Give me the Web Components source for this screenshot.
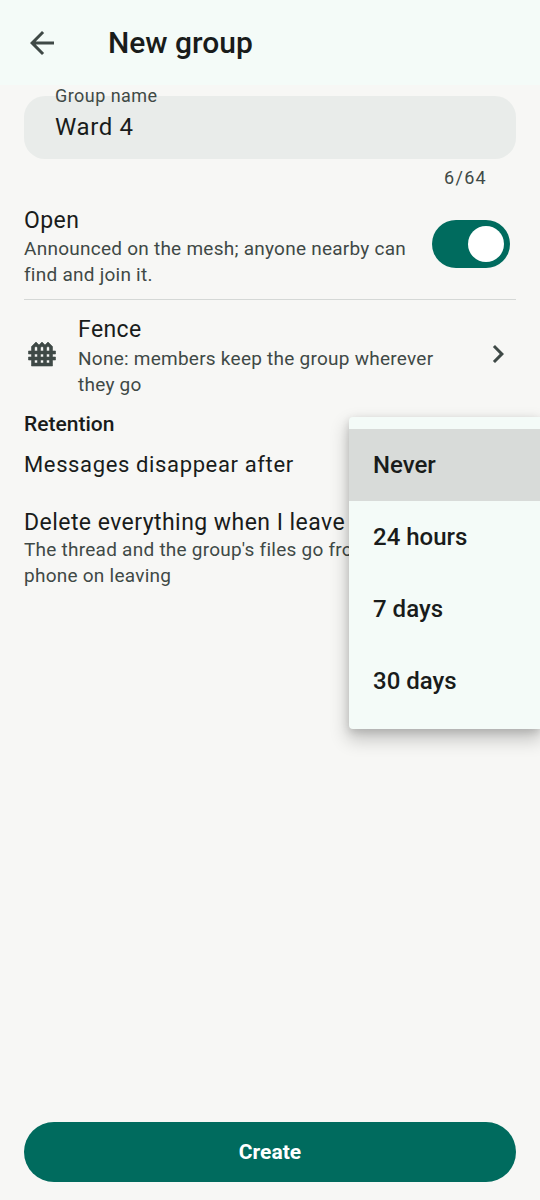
<!DOCTYPE html>
<html>
<head>
<meta charset="utf-8">
<title>New group</title>
<style>
  html, body { margin: 0; padding: 0; }
  body {
    width: 540px; height: 1200px; overflow: hidden; position: relative;
    background: #f7f7f5; color: #191c1b;
    font-family: Roboto, "Liberation Sans", sans-serif;
    display: flex; flex-direction: column;
  }
  main { flex: 1; display: flex; flex-direction: column; padding: 0 24px; }
</style>
</head>
<body>
<app-bar>New group</app-bar>
<main>
  <text-field label="Group name" value="Ward 4" counter="6/64"></text-field>
  <switch-row title="Open" on>Announced on the mesh; anyone nearby can find and join it.</switch-row>
  <nav-row title="Fence">None: members keep the group wherever they go</nav-row>
  <section-label>Retention</section-label>
  <plain-row title="Messages disappear after"></plain-row>
  <plain-row class="leave" title="Delete everything when I leave">The thread and the group's files go from this phone on leaving</plain-row>
</main>
<action-button>Create</action-button>
<drop-menu>
  <menu-item selected>Never</menu-item>
  <menu-item>24 hours</menu-item>
  <menu-item>7 days</menu-item>
  <menu-item>30 days</menu-item>
</drop-menu>

<script>
class AppBar extends HTMLElement {
  constructor() {
    super();
    this.attachShadow({ mode: 'open' });
    this.shadowRoot.innerHTML = `
      <style>
        :host { display: flex; align-items: center; height: 85px; flex: none; background: #f4fbf8; padding-left: 24px; box-sizing: border-box; }
        svg { width: 36px; height: 36px; fill: #3f4946; flex: none; }
        .title { margin-left: 48px; font-size: 30px; font-weight: 500; color: #191c1b; letter-spacing: 0; }
      </style>
      <svg viewBox="0 0 24 24"><path d="M20 11H7.83l5.59-5.59L12 4l-8 8 8 8 1.41-1.41L7.83 13H20v-2z"/></svg>
      <span class="title"><slot></slot></span>`;
  }
}

class TextField extends HTMLElement {
  constructor() {
    super();
    this.attachShadow({ mode: 'open' });
  }
  connectedCallback() {
    this.shadowRoot.innerHTML = `
      <style>
        :host { display: block; padding-top: 11px; }
        .box { position: relative; height: 63px; border-radius: 21px; background: #e9ecea; display: flex; align-items: center; padding: 0 31px 2px 31px; box-sizing: border-box; font-size: 24px; letter-spacing: 0.65px; color: #191c1b; }
        .label { position: absolute; left: 31px; top: -11px; font-size: 18px; line-height: 21px; letter-spacing: 0.45px; color: #3f4946; }
        .count { text-align: right; padding: 8px 29px 0 0; font-size: 18px; line-height: 22px; letter-spacing: 1.3px; color: #3f4946; }
      </style>
      <div class="box"><span class="label">${this.getAttribute('label')}</span>${this.getAttribute('value')}</div>
      <div class="count">${this.getAttribute('counter')}</div>`;
  }
}

class SwitchRow extends HTMLElement {
  constructor() {
    super();
    this.attachShadow({ mode: 'open' });
  }
  connectedCallback() {
    this.shadowRoot.innerHTML = `
      <style>
        :host { display: flex; align-items: center; justify-content: space-between; height: 111px; padding-bottom: 1px; box-sizing: border-box; border-bottom: 1px solid #d5d8d6; }
        .text { width: 392px; padding-top: 6px; }
        .t { font-size: 23px; line-height: 30px; letter-spacing: 0.4px; color: #191c1b; }
        .s { font-size: 19px; line-height: 26px; letter-spacing: 0.25px; color: #3f4946; }
        .track { width: 78px; height: 48px; border-radius: 24px; background: #006b5e; margin-right: 6px; position: relative; flex: none; }
        .thumb { position: absolute; right: 6px; top: 6px; width: 36px; height: 36px; border-radius: 50%; background: #fff; }
      </style>
      <div class="text"><div class="t">${this.getAttribute('title')}</div><div class="s"><slot></slot></div></div>
      <div class="track"><div class="thumb"></div></div>`;
  }
}

class NavRow extends HTMLElement {
  constructor() {
    super();
    this.attachShadow({ mode: 'open' });
  }
  connectedCallback() {
    this.shadowRoot.innerHTML = `
      <style>
        :host { display: flex; align-items: center; height: 108px; box-sizing: border-box; }
        .fence { width: 36px; height: 36px; fill: #3f4946; stroke: #3f4946; stroke-width: .4; stroke-linejoin: round; flex: none; }
        .text { margin-left: 18px; width: 372px; flex: none; padding-top: 5px; }
        .t { font-size: 23px; line-height: 30px; letter-spacing: 0.4px; color: #191c1b; }
        .s { font-size: 19px; line-height: 26px; letter-spacing: 0.25px; color: #3f4946; padding-top: 1px; }
        .chev { width: 36px; height: 36px; fill: #3f4946; margin-left: 30px; flex: none; }
      </style>
      <svg class="fence" viewBox="0 0 24 24"><path d="M21 12v-2h-2V7l-3-3-2 2-2-2-2 2-2-2-3 3v3H3v2h2v2H3v2h2v4h14v-4h2v-2h-2v-2h2zM16 6.83l1 1V10h-2V7.83l.41-.41.59-.59zM12 6.83l.59.59.41.41V10h-2V7.83l.41-.41.59-.59zM11 14v-2h2v2h-2zm2 2v2.02h-2V16h2zM9 12v2H7v-2h2zM8 6.83l.59.59.41.41V10H7V7.83l1-1zM7 16h2v2.02H7V16zm10 2.02h-2V16h2v2.02zM17 14h-2v-2h2v2z"/></svg>
      <div class="text"><div class="t">${this.getAttribute('title')}</div><div class="s"><slot></slot></div></div>
      <svg class="chev" viewBox="0 0 24 24"><path d="M10 6L8.59 7.41 13.17 12l-4.58 4.59L10 18l6-6z"/></svg>`;
  }
}

class SectionLabel extends HTMLElement {
  constructor() {
    super();
    this.attachShadow({ mode: 'open' });
    this.shadowRoot.innerHTML = `
      <style>
        :host { display: block; font-size: 21px; font-weight: 500; line-height: 28px; color: #191c1b; position: relative; top: 2px; }
      </style>
      <slot></slot>`;
  }
}

class PlainRow extends HTMLElement {
  constructor() {
    super();
    this.attachShadow({ mode: 'open' });
  }
  connectedCallback() {
    this.shadowRoot.innerHTML = `
      <style>
        :host { display: block; padding-top: 14px; }
        :host(.leave) { padding-top: 28px; }
        .t { font-size: 22px; line-height: 30px; letter-spacing: 0.63px; color: #191c1b; }
        :host(.leave) .t { font-size: 23px; line-height: 29px; letter-spacing: 0.45px; }
        .s { font-size: 19px; line-height: 26px; letter-spacing: 0.25px; color: #3f4946; width: 400px; }
      </style>
      <div class="t">${this.getAttribute('title')}</div>
      <div class="s"><slot></slot></div>`;
  }
}

class ActionButton extends HTMLElement {
  constructor() {
    super();
    this.attachShadow({ mode: 'open' });
    this.shadowRoot.innerHTML = `
      <style>
        :host { display: flex; align-items: center; justify-content: center; flex: none; height: 60px; margin: 0 24px 18px; border-radius: 30px; background: #006b5e; color: #fff; font-size: 21px; font-weight: 700; }
      </style>
      <slot></slot>`;
  }
}

class DropMenu extends HTMLElement {
  constructor() {
    super();
    this.attachShadow({ mode: 'open' });
    this.shadowRoot.innerHTML = `
      <style>
        :host { position: absolute; left: 349px; top: 417px; width: 191px; padding: 12px 0; box-sizing: border-box; background: #f4fbf8; border-radius: 4px 0 0 4px; box-shadow: 0 9px 18px 2px rgba(0,0,0,.2), 0 3px 8px rgba(0,0,0,.14); }
      </style>
      <slot></slot>`;
  }
}

class MenuItem extends HTMLElement {
  constructor() {
    super();
    this.attachShadow({ mode: 'open' });
    this.shadowRoot.innerHTML = `
      <style>
        :host { display: flex; align-items: center; height: 72px; padding-left: 24px; font-size: 24px; font-weight: 500; color: #191c1b; }
        :host([selected]) { background: #d8dbd9; }
      </style>
      <slot></slot>`;
  }
}

customElements.define('app-bar', AppBar);
customElements.define('text-field', TextField);
customElements.define('switch-row', SwitchRow);
customElements.define('nav-row', NavRow);
customElements.define('section-label', SectionLabel);
customElements.define('plain-row', PlainRow);
customElements.define('action-button', ActionButton);
customElements.define('drop-menu', DropMenu);
customElements.define('menu-item', MenuItem);
</script>
</body>
</html>
